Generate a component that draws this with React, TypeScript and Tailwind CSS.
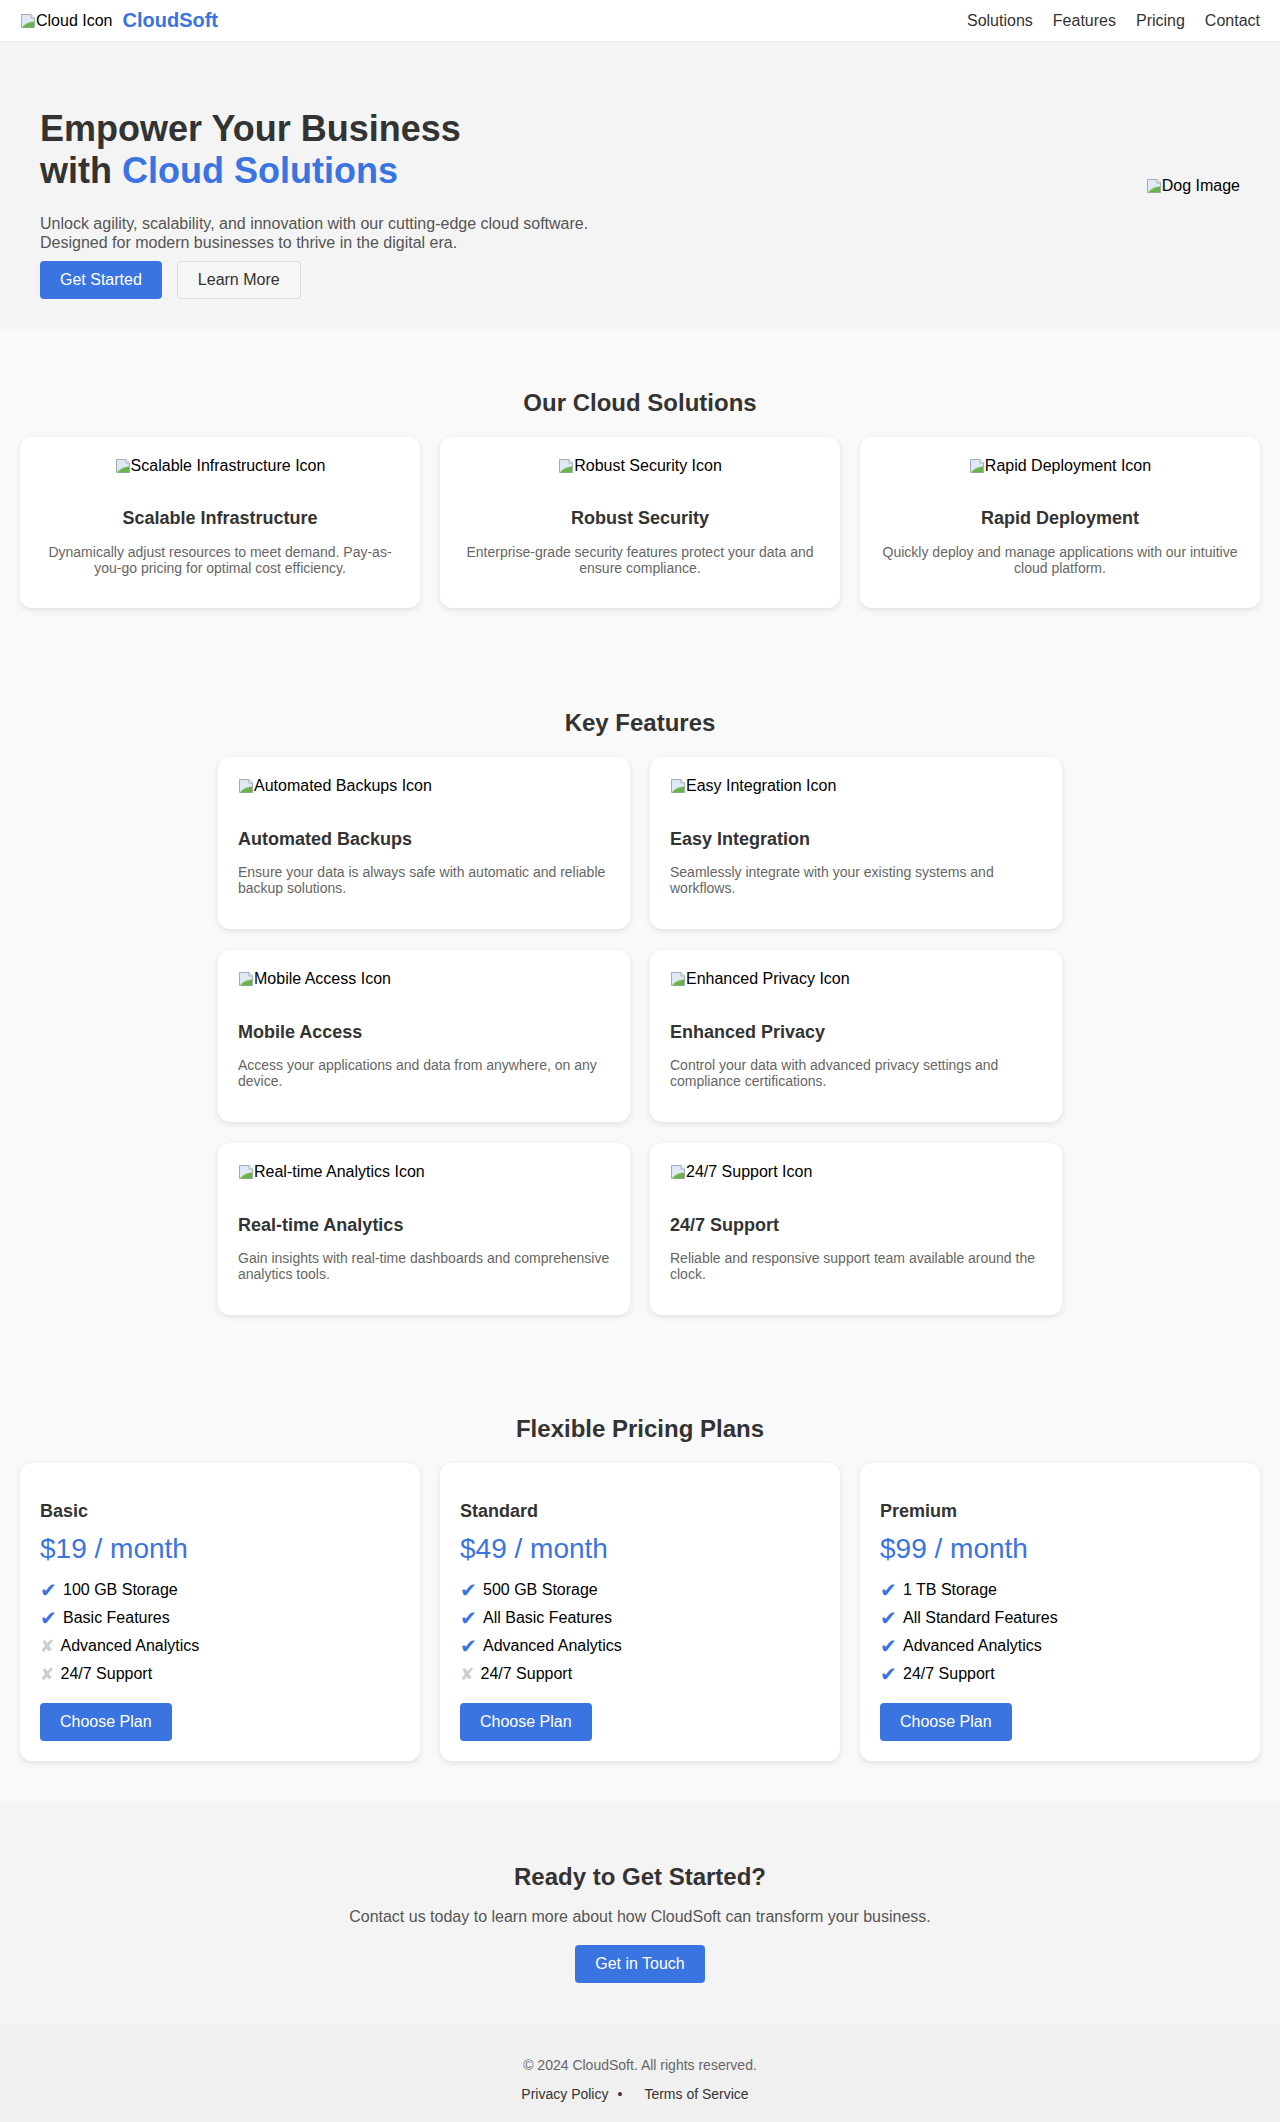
import React from "react";

const BLUE = "#3a74e0";

function BrokenImg({ alt }: { alt: string }) {
  return (
    <span className="flex items-center text-black text-[16px] leading-[18px]">
      <svg width="16" height="16" viewBox="0 0 16 16" className="shrink-0">
        <path d="M1.5 1.5h9.5l3.5 3.5v9.5h-13z" fill="#dfe9f5" stroke="#a3acb6" />
        <path d="M11 1.5v3.5h3.5" fill="#f4f6f8" stroke="#a3acb6" />
        <path d="M2 14.5c3-4 7-6 12-6v6z" fill="#6ab04c" />
        <path d="M2 14.5c3-3 6-4.5 9-5" stroke="#8fcf6a" fill="none" />
      </svg>
      <span>{alt}</span>
    </span>
  );
}

function Button({ children, outline = false }: { children: React.ReactNode; outline?: boolean }) {
  return (
    <button
      className={
        outline
          ? "px-5 py-[9px] rounded-[4px] border border-[#dddddd] bg-[#f6f6f6] text-[#333] text-[16px] leading-[18px]"
          : "px-5 py-[10px] rounded-[4px] text-white text-[16px] leading-[18px] bg-[#3a74e0]"
      }
    >
      {children}
    </button>
  );
}

const solutions = [
  {
    icon: "Scalable Infrastructure Icon",
    title: "Scalable Infrastructure",
    text: "Dynamically adjust resources to meet demand. Pay-as-you-go pricing for optimal cost efficiency.",
  },
  {
    icon: "Robust Security Icon",
    title: "Robust Security",
    text: "Enterprise-grade security features protect your data and ensure compliance.",
  },
  {
    icon: "Rapid Deployment Icon",
    title: "Rapid Deployment",
    text: "Quickly deploy and manage applications with our intuitive cloud platform.",
  },
];

const features = [
  { icon: "Automated Backups Icon", title: "Automated Backups", text: "Ensure your data is always safe with automatic and reliable backup solutions." },
  { icon: "Easy Integration Icon", title: "Easy Integration", text: "Seamlessly integrate with your existing systems and workflows." },
  { icon: "Mobile Access Icon", title: "Mobile Access", text: "Access your applications and data from anywhere, on any device." },
  { icon: "Enhanced Privacy Icon", title: "Enhanced Privacy", text: "Control your data with advanced privacy settings and compliance certifications." },
  { icon: "Real-time Analytics Icon", title: "Real-time Analytics", text: "Gain insights with real-time dashboards and comprehensive analytics tools." },
  { icon: "24/7 Support Icon", title: "24/7 Support", text: "Reliable and responsive support team available around the clock." },
];

const plans = [
  {
    name: "Basic",
    price: "$19 / month",
    items: [
      { ok: true, label: "100 GB Storage" },
      { ok: true, label: "Basic Features" },
      { ok: false, label: "Advanced Analytics" },
      { ok: false, label: "24/7 Support" },
    ],
  },
  {
    name: "Standard",
    price: "$49 / month",
    items: [
      { ok: true, label: "500 GB Storage" },
      { ok: true, label: "All Basic Features" },
      { ok: true, label: "Advanced Analytics" },
      { ok: false, label: "24/7 Support" },
    ],
  },
  {
    name: "Premium",
    price: "$99 / month",
    items: [
      { ok: true, label: "1 TB Storage" },
      { ok: true, label: "All Standard Features" },
      { ok: true, label: "Advanced Analytics" },
      { ok: true, label: "24/7 Support" },
    ],
  },
];

const card = "bg-white rounded-[12px] shadow-[0_2px_6px_rgba(0,0,0,0.1)]";

export default function App() {
  return (
    <div className="font-['Liberation_Sans',Arial,sans-serif] bg-[#f9f9f9] text-[#333]">
      {/* header */}
      <header className="h-[42px] bg-white border-b border-[#e8e8e8] flex items-center justify-between px-5">
        <div className="flex items-center gap-[10px]">
          <BrokenImg alt="Cloud Icon" />
          <span className="text-[20px] leading-[23px] font-bold" style={{ color: BLUE }}>
            CloudSoft
          </span>
        </div>
        <nav className="flex gap-5 text-[16px] leading-[18px] text-[#333]">
          <a>Solutions</a>
          <a>Features</a>
          <a>Pricing</a>
          <a>Contact</a>
        </nav>
      </header>

      {/* hero */}
      <section className="bg-[#f4f4f4] flex justify-between px-10">
        <div className="pt-[66px] pb-[30px]">
          <h1 className="text-[36px] leading-[42px] font-bold text-[#333]">
            Empower Your Business
            <br />
            with <span className="text-[#3a74e0]">Cloud Solutions</span>
          </h1>
          <p className="mt-[22px] text-[16px] leading-[19px] text-[#555]">
            Unlock agility, scalability, and innovation with our cutting-edge cloud software.
            <br />
            Designed for modern businesses to thrive in the digital era.
          </p>
          <div className="mt-[9px] flex gap-[15px]">
            <Button>Get Started</Button>
            <Button outline>Learn More</Button>
          </div>
        </div>
        <div className="self-center">
          <BrokenImg alt="Dog Image" />
        </div>
      </section>

      {/* solutions */}
      <section className="pt-[60px] pb-[40px] px-5">
        <h2 className="text-[24px] leading-[28px] font-bold text-center text-[#333]">Our Cloud Solutions</h2>
        <div className="mt-5 grid grid-cols-3 gap-5">
          {solutions.map((s) => (
            <div key={s.title} className={`${card} px-5 pt-5 pb-[32px] text-center`}>
              <div className="flex justify-center">
                <BrokenImg alt={s.icon} />
              </div>
              <h3 className="mt-[33px] text-[18px] leading-[21px] font-bold text-[#333]">{s.title}</h3>
              <p className="mt-[15px] text-[14px] leading-[16px] text-[#666]">{s.text}</p>
            </div>
          ))}
        </div>
      </section>

      {/* features */}
      <section className="pt-[61px] pb-[40px] px-5">
        <h2 className="text-[24px] leading-[28px] font-bold text-center text-[#333]">Key Features</h2>
        <div className="mt-5 mx-auto w-[844px] grid grid-cols-2 gap-x-5 gap-y-[21px]">
          {features.map((f) => (
            <div key={f.title} className={`${card} px-5 pt-5 pb-[33px]`}>
              <div className="flex">
                <BrokenImg alt={f.icon} />
              </div>
              <h3 className="mt-[34px] text-[18px] leading-[21px] font-bold text-[#333]">{f.title}</h3>
              <p className="mt-[14px] text-[14px] leading-[16px] text-[#666]">{f.text}</p>
            </div>
          ))}
        </div>
      </section>

      {/* pricing */}
      <section className="pt-[60px] pb-[40px] px-5">
        <h2 className="text-[24px] leading-[28px] font-bold text-center text-[#333]">Flexible Pricing Plans</h2>
        <div className="mt-5 grid grid-cols-3 gap-5">
          {plans.map((p) => (
            <div key={p.name} className={`${card} p-5`}>
              <h3 className="mt-[18px] text-[18px] leading-[21px] font-bold text-[#333]">{p.name}</h3>
              <div className="mt-[11px] text-[28px] leading-[32px]" style={{ color: BLUE }}>
                {p.price}
              </div>
              <ul className="mt-4 mb-5 flex flex-col gap-[10px]">
                {p.items.map((it) => (
                  <li key={it.label} className="flex items-center text-[16px] leading-[18px] text-black">
                    {it.ok ? (
                      <span className="w-[23px] font-['DejaVu_Sans',sans-serif] text-[20px] leading-[18px] text-[#3a74e0]">✔</span>
                    ) : (
                      <span className="w-[20.5px] font-['DejaVu_Sans',sans-serif] text-[17px] leading-[18px] text-[#cccccc]">✘</span>
                    )}
                    <span>{it.label}</span>
                  </li>
                ))}
              </ul>
              <Button>Choose Plan</Button>
            </div>
          ))}
        </div>
      </section>

      {/* cta */}
      <section className="bg-[#f4f4f4] pt-[62px] pb-[42px] flex flex-col items-center">
        <h2 className="text-[24px] leading-[28px] font-bold text-[#333]">Ready to Get Started?</h2>
        <p className="mt-4 text-[16px] leading-[19px] text-[#555]">
          Contact us today to learn more about how CloudSoft can transform your business.
        </p>
        <div className="mt-[19px]">
          <Button>Get in Touch</Button>
        </div>
      </section>

      {/* footer */}
      <footer className="bg-[#f0f0f0] pt-[32px] pb-[21px] flex flex-col items-center text-[14px] leading-[16px]">
        <p className="text-[#666]">© 2024 CloudSoft. All rights reserved.</p>
        <div className="mt-[13px] flex items-center pr-[10px] text-[#333]">
          <a>Privacy Policy</a>
          <span className="ml-[9px]">•</span>
          <a className="ml-[22px]">Terms of Service</a>
        </div>
      </footer>
    </div>
  );
}
